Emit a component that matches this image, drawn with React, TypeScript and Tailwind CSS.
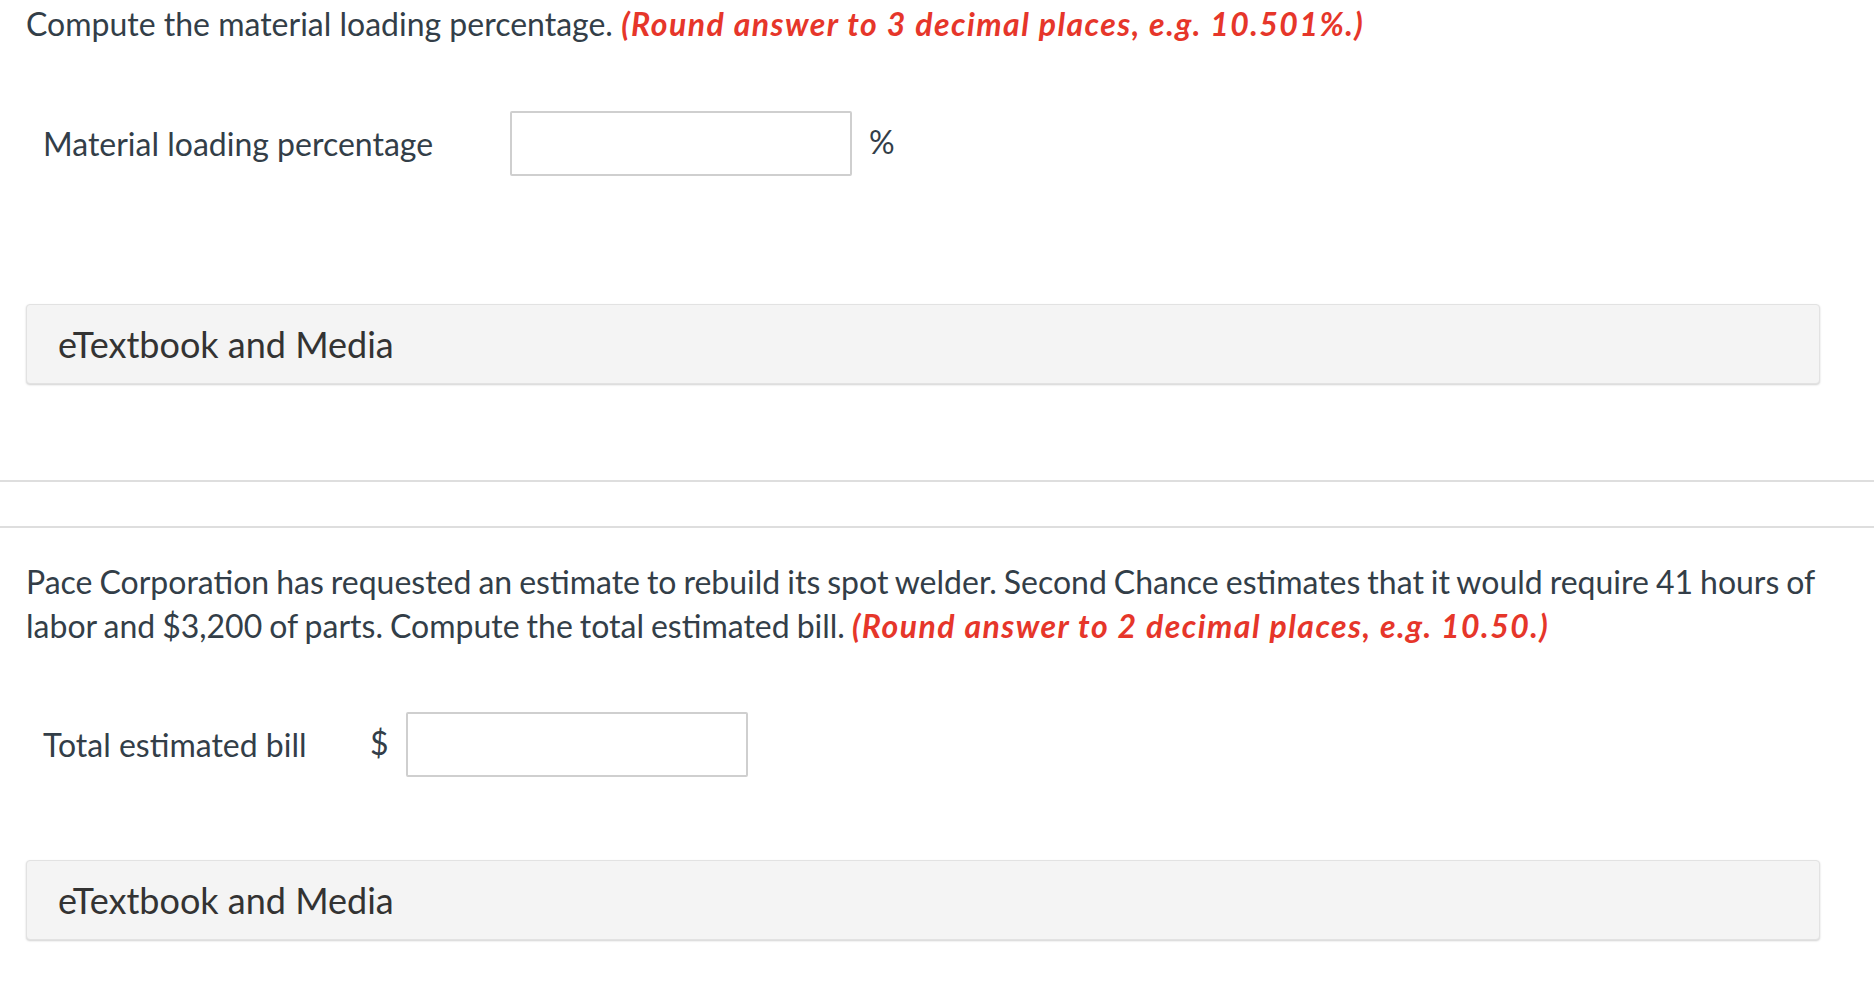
import React from "react";

function EBox() {
  return (
    <div className="h-[80px] rounded-[4px] bg-[#f4f4f4] border border-[#e2e2e2] shadow-[0_1px_2px_rgba(0,0,0,0.18)] flex items-center pl-[31px] text-[36px] text-[#333333]">
      eTextbook and Media
    </div>
  );
}

export default function App() {
  return (
    <div className="min-h-screen bg-white font-['Lato',sans-serif] text-[#333e48]">
      <div className="pl-[26px] pr-[54px]">
        <p className="mt-[2px] text-[32px] leading-[44px]">
          Compute the material loading percentage.{" "}
          <span className="font-bold italic text-[#e6362a] tracking-[1.45px]">
            (Round answer to 3 decimal places, e.g. 10.501%.)
          </span>
        </p>
        <div className="mt-[65px] flex items-center">
          <div className="w-[484px] pl-[17px] text-[32px]">Material loading percentage</div>
          <div className="w-[342px] h-[65px] border-2 border-[#cfcfcf] rounded-[2px] bg-white" />
          <div className="ml-[17px] text-[32px] -mt-[4px]">%</div>
        </div>
        <div className="mt-[128px]">
          <EBox />
        </div>
      </div>
      <div className="mt-[96px] h-[2px] bg-[#dedede]" />
      <div className="mt-[44px] h-[2px] bg-[#dedede]" />
      <div className="pl-[26px] pr-[54px]">
        <p className="mt-[32px] text-[32px] leading-[44px] [word-spacing:-1.2px]">
          Pace Corporation has requested an estimate to rebuild its spot welder. Second Chance estimates that it would require 41 hours of labor and $3,200 of parts. Compute the total estimated bill.{" "}
          <span className="font-bold italic text-[#e6362a] tracking-[1.45px] [word-spacing:0px]">
            (Round answer to 2 decimal places, e.g. 10.50.)
          </span>
        </p>
        <div className="mt-[64px] flex items-center">
          <div className="w-[344px] pl-[17px] text-[32px]">Total estimated bill</div>
          <div className="w-[36px] text-[32px] -mt-[4px]">$</div>
          <div className="w-[342px] h-[65px] border-2 border-[#cfcfcf] rounded-[2px] bg-white" />
        </div>
        <div className="mt-[83px]">
          <EBox />
        </div>
      </div>
    </div>
  );
}
